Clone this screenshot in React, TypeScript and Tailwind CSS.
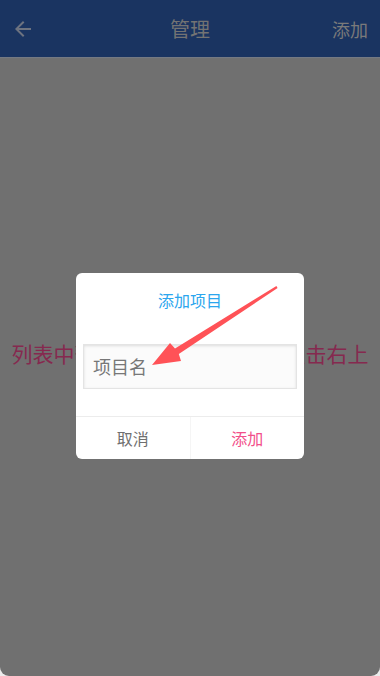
import React from "react";

const cjk = { fontFamily: '"Noto Sans CJK SC", "Noto Sans", sans-serif' };

function Header() {
  return (
    <div className="relative h-[57px] bg-[#1a3461] flex items-center shadow-[0_1px_1px_rgba(120,130,150,0.5)]">
      {/* back */}
      <div className="absolute left-[11px] top-[17px]">
        <svg width="24" height="24" viewBox="0 0 24 24" fill="#6d7380">
          <path d="M20 11H7.83l5.59-5.59L12 4l-8 8 8 8 1.41-1.41L7.83 13H20v-2z" />
        </svg>
      </div>
      <div className="flex-1 text-center text-[20px] leading-[26px] text-[#737373]">管理</div>
      <div className="absolute right-[12px] top-[16px] text-[18px] leading-[26px] text-[#7a7a7a]">添加</div>
    </div>
  );
}

function Dialog() {
  return (
    <div className="absolute left-[76px] top-[273px] w-[228px] h-[186px] bg-white rounded-[6px] flex flex-col">
      <div className="pt-[17px] text-center text-[16px] leading-[20px] text-[#2ba6ee]">添加项目</div>
      <div className="mx-[7px] mt-[34px] h-[45px] border border-[#e4e4e4] bg-[#fbfbfb] shadow-[inset_0_1px_3px_rgba(0,0,0,0.12)] flex items-center px-[9px]">
        <span className="text-[18px] text-[#777]">项目名</span>
      </div>
      <div className="mt-[27px] border-t border-[#ececec] flex flex-1">
        <div className="flex-1 flex items-center justify-center text-[16px] text-[#6f6f6f] border-r border-[#f5f5f5]">取消</div>
        <div className="flex-1 flex items-center justify-center text-[16px] text-[#f24f8a]">添加</div>
      </div>
    </div>
  );
}

export default function App() {
  return (
    <div className="w-[380px] h-[676px] bg-[#ececec]" style={cjk}>
      <div className="relative w-full h-full bg-[#707070] rounded-b-[9px] overflow-hidden flex flex-col">
        <Header />
        <div className="flex-1 flex items-center justify-center px-[11px] pb-[2px]">
          <p className="text-center text-[21px] leading-[25px] text-[#86294f]">
            列表中暂时没有任何项目，请点击右上角添加
          </p>
        </div>
        <Dialog />
        {/* annotation arrow */}
        <svg className="absolute inset-0 pointer-events-none" width="380" height="676" viewBox="0 0 380 676">
          <polygon
            points="152,365 170,343 175,348.5 276.4,286 277.6,288 178.8,354 181,361"
            fill="#ff5257"
          />
        </svg>
      </div>
    </div>
  );
}
